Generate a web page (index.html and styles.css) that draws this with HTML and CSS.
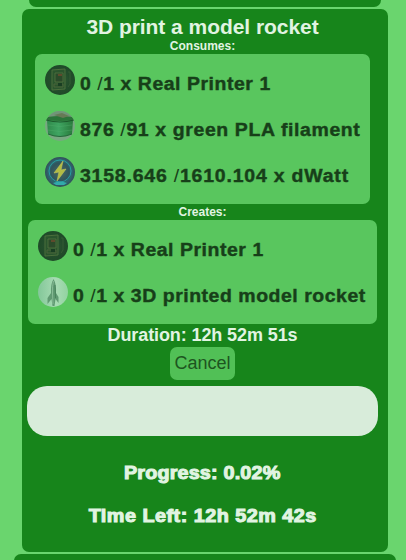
FILE: index.html
```html
<!DOCTYPE html>
<html lang="en">
<head>
<meta charset="utf-8">
<title>Print queue</title>
<link rel="stylesheet" href="styles.css">
</head>
<body>
<svg class="defs" aria-hidden="true">
  <defs>
    <radialGradient id="dark"><stop offset="0" stop-color="#305d34"/><stop offset=".65" stop-color="#234d2b"/><stop offset="1" stop-color="#1f4a28"/></radialGradient>
    <linearGradient id="spool"><stop offset="0" stop-color="#2f8a4b"/><stop offset=".45" stop-color="#3fa562"/><stop offset="1" stop-color="#287a3b"/></linearGradient>
    <radialGradient id="energy"><stop offset="0" stop-color="#4a6a60"/><stop offset=".6" stop-color="#30545c"/><stop offset=".78" stop-color="#2c6870"/><stop offset="1" stop-color="#344f5a"/></radialGradient>
    <linearGradient id="pale"><stop offset="0" stop-color="#83c799"/><stop offset=".6" stop-color="#a8dbb4"/><stop offset="1" stop-color="#92d3a0"/></linearGradient>
    <clipPath id="disc"><circle cx="15" cy="15" r="15"/></clipPath>
    <symbol id="printer" viewBox="0 0 30 30">
      <circle cx="15" cy="15" r="15" fill="url(#dark)"/>
      <path d="M7 5 20 4v20L7 25Z" fill="#2a552d" stroke="#4b6e3c"/>
      <path d="M10 8 18 8v9H10Z" fill="#2b4a2a" stroke="#54753f" stroke-width=".8"/>
      <path d="M9 19h9v3H9Z" fill="none" stroke="#4a643a"/>
      <path d="M13 9h4v2h-4Z" fill="#5e4a2c"/><path d="M13 18h4v3h-4Z" fill="#193d22"/>
      <path d="M23 7h2v12l-2 3" fill="none" stroke="#355c34"/>
    </symbol>
    <symbol id="filament" viewBox="0 0 30 30">
      <g clip-path="url(#disc)"><path fill="#78a981" d="M0 0h30v30H0Z"/><path d="M0 0h30v6H0Z" fill="#719578"/>
      <path d="M2 9h26l-1 14q-12 5-24 0Z" fill="url(#spool)"/>
      <ellipse cx="15" cy="7.500" rx="15" ry="2.500" fill="#2b7539"/>
      <path d="M9 4 17 2l7 3-6 2Z" fill="#667a55"/><path d="M1 9q14 4 28 0" fill="none" stroke="#1d5a2c"/>
      <path d="M3 14q12 3 24 0M3 19q12 3 24 0" fill="none" stroke="#54ad6c" stroke-width=".4"/>
      <path d="M3 23q12 5 24 0" fill="none" stroke="#25683a"/></g>
    </symbol>
    <symbol id="power" viewBox="0 0 30 30">
      <circle cx="15" cy="15" r="15" fill="url(#energy)"/><circle cx="15" cy="14" r="11" fill="none" stroke="#289ba0" stroke-width="1"/>
      <path d="M8 26q7-3 14 0l-3 2h-8Z" fill="#32aaaa"/>
      <path d="m18 4-9 12 5-1-2 9 9-12-5 1Z" fill="#b3bb43" stroke="#c0c55c" stroke-width=".6"/>
    </symbol>
    <symbol id="rocket" viewBox="0 0 30 30">
      <circle cx="15" cy="15" r="15" fill="url(#pale)"/>
      <path d="M15.500 2q-3 5-2.500 14l-3.500 5v6l4-5 1 7h2l1-7 3 4v-6L18 16q.5-9-2.500-14Z" fill="#609a72"/>
      <path d="M15.500 4q-1.500 5-1 13l.5 10" fill="none" stroke="#86b994"/><path d="m17 8 .5 13" stroke="#437b56" stroke-width=".8"/>
    </symbol>
  </defs>
</svg>
<main class="queue">
  <section class="card previous"></section>
  <section class="card job">
    <h1 class="title">3D print a model rocket</h1>
    <h2 class="label">Consumes:</h2>
    <div class="items consumes">
      <div class="item"><svg class="icon"><use href="#printer"/></svg><span class="name">0 <i>/</i>1 x Real Printer 1</span></div>
      <div class="item"><svg class="icon"><use href="#filament"/></svg><span class="name filament">876 <i>/</i>91 x green PLA filament</span></div>
      <div class="item"><svg class="icon"><use href="#power"/></svg><span class="name power">3158.646 <i>/</i>1610.104 x dWatt</span></div>
    </div>
    <h2 class="label creates-label">Creates:</h2>
    <div class="items creates">
      <div class="item"><svg class="icon"><use href="#printer"/></svg><span class="name">0 <i>/</i>1 x Real Printer 1</span></div>
      <div class="item"><svg class="icon"><use href="#rocket"/></svg><span class="name">0 <i>/</i>1 x 3D printed model rocket</span></div>
    </div>
    <div class="duration">Duration: 12h 52m 51s</div>
    <button class="cancel">Cancel</button>
    <div class="bar"></div>
    <p class="status progress">Progress: 0.02%</p>
    <p class="status time">Time Left: 12h 52m 42s</p>
  </section>
  <section class="card next"></section>
</main>
</body>
</html>
```
FILE: styles.css
```css
* { box-sizing: border-box; }
body { margin: 0; height: 560px; overflow: hidden; background: #6ad56e; font-family: "Liberation Sans", Arial, sans-serif; }
.defs { display: block; width: 0; height: 0; }
.queue { display: flex; flex-direction: column; align-items: center; gap: 2px; padding-left: 4px; }
.card { flex: none; background: #17851b; border-radius: 7px; }
.previous { width: 352px; height: 7px; border-radius: 0 0 7px 7px; }
.next { width: 382px; height: 20px; }
.job { width: 366px; height: 543px; padding: 6px 5px 0; display: flex; flex-direction: column; align-items: center; color: #e1f4e2; }
.title { margin: 0; height: 24px; font-size: 21px; line-height: 24px; white-space: nowrap; margin-left: -5px; letter-spacing: -.05px; }
.label { margin: 0; height: 15px; font-size: 12px; line-height: 14px; margin-left: -5px; }
.creates-label { height: 16px; line-height: 17px; }
.items { flex: none; background: #59c65e; border-radius: 7px; padding: 3px 10px 0; margin-left: -5px; }
.consumes { width: 335px; height: 150px; }
.creates { width: 349px; height: 104px; }
.item { height: 46px; display: flex; gap: 5px; padding-top: 8px; }
.icon { flex: none; width: 30px; height: 30px; }
.name { height: 30px; line-height: 39px; font-size: 18px; font-weight: 700; color: #173f19; white-space: nowrap; letter-spacing: .5px; -webkit-text-stroke: .4px currentColor; transform: scaleX(1.08); transform-origin: left; }
.filament { letter-spacing: .58px; }
.power { letter-spacing: .75px; }
.name i { font-style: normal; font-weight: 400; -webkit-text-stroke: 0; }
.duration { margin-left: -5px; height: 23px; font-size: 18px; line-height: 22px; font-weight: 700; letter-spacing: -.1px; }
.cancel { flex: none; width: 65px; height: 33px; margin-left: -5px; padding: 0; border: 0; border-radius: 7px; background: #51c056; color: #1d551f; font: 18px/33px "Liberation Sans", Arial, sans-serif; }
.bar { flex: none; width: 351px; height: 50px; margin: 6px 0 0 -5px; border-radius: 20px; background: #d8ecda; }
.status { margin: 25px 0 0 -5px; height: 22px; line-height: 24px; font-size: 18px; font-weight: 700; white-space: nowrap; letter-spacing: .15px; -webkit-text-stroke: 1px currentColor; transform: scaleX(1.1); }
.time { margin-top: 21px; letter-spacing: .44px; }
```
